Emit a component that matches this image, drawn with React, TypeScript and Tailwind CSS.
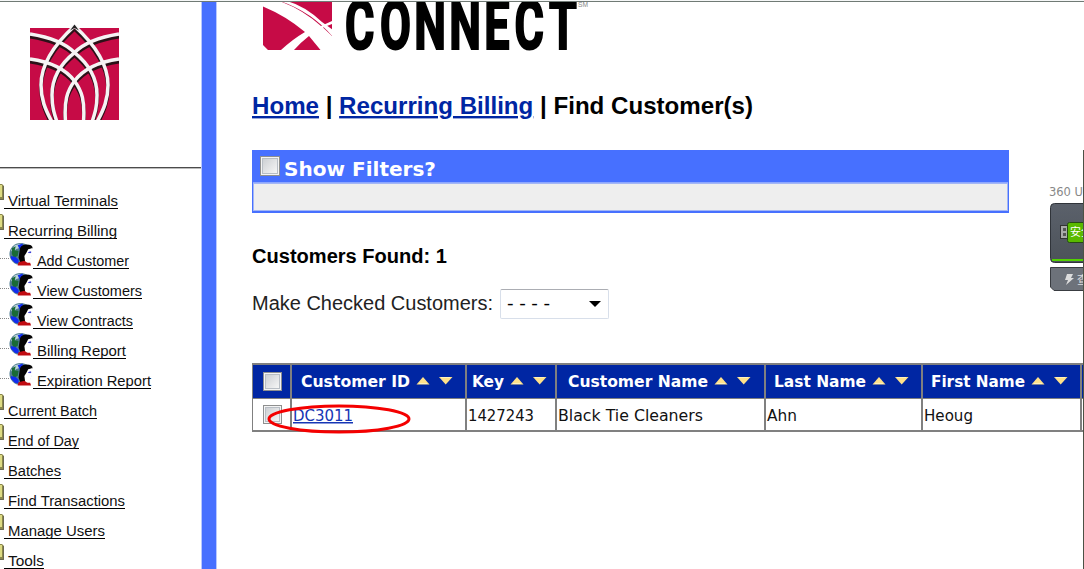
import React from "react";

const nav = [
  { label: "Virtual Terminals", child: false, w: "w-[114px]" },
  { label: "Recurring Billing", child: false, w: "w-[113px]" },
  { label: "Add Customer", child: true, w: "w-[96px]" },
  { label: "View Customers", child: true, w: "w-[109px]" },
  { label: "View Contracts", child: true, w: "w-[100px]" },
  { label: "Billing Report", child: true, w: "w-[93px]" },
  { label: "Expiration Report", child: true, w: "w-[118px]" },
  { label: "Current Batch", child: false, w: "w-[93px]" },
  { label: "End of Day", child: false, w: "w-[75px]" },
  { label: "Batches", child: false, w: "w-[57px]" },
  { label: "Find Transactions", child: false, w: "w-[121px]" },
  { label: "Manage Users", child: false, w: "w-[101px]" },
  { label: "Tools", child: false, w: "w-[40px]" },
];

function Petals() {
  const half =
    "M44.5 -3C28 12 11 32 11 56C11 70 15 80 22 93M0 5C25 9 38 17 44.5 23.6C60 36 67 50 67 66C67 78 65 84 62 93M0 30C22 33 37 42 44.5 52C52 62 55 72 53.5 93";
  return (
    <>
      <path d={half} />
      <path d={half} transform="translate(89 0) scale(-1 1)" />
    </>
  );
}

function Emblem() {
  return (
    <svg width="91" height="96" viewBox="-1 -5 91 96" className="block">
      <path d="M0 -1H89V91H0Z" fill="#c60b46" />
      <path d="M35 -1H54L49 -3L44.5 -5L40 -3Z" fill="#fff" />
      <g fill="none" stroke="#2b1118" strokeWidth="3.6" transform="translate(0 2.8)"><Petals /></g>
      <g fill="none" stroke="#f5f3f4" strokeWidth="3.5"><Petals /></g>
      <path d="M40 1.5L44.5 -4.5L49 1.5L44.5 -1Z" fill="#222" />
      <path d="M-1 -5H0V91H-1ZM89 -5H90V91H89Z" fill="#fff" />
    </svg>
  );
}

function GlobeFace() {
  return (
    <svg width="25" height="26" viewBox="0 0 25 26" className="block">
      <circle cx="12" cy="13" r="11.5" fill="#527d93" />
      <path d="M2 9L6 4L13 2L10 7L7 8L5 13Z" fill="#bad3d6" />
      <path d="M3 7L7 5L6 9L10 10L9 15L5 17L3 13Z" fill="#196b36" />
      <path d="M2 15L7 16L10 19L10 23L6 22L2 18ZM9 4L14 2L15 6L11 8Z" fill="#102cf0" />
      <path d="M11 10Q11 3 18 3Q25 3 24.5 7L20 9L18 14L17 18V22H12L10 17Z" fill="#050505" />
      <path d="M24 7L20 8L18 12L16 15L17 22H22L22.5 18L24 17L23.5 15L25 13L23.5 11Z" fill="#fff" />
      <path d="M20 11.5H23M22 10V12" stroke="#3436d6" />
      <path d="M9 25L10 21.5L16 20L19 22H22L23 25Z" fill="#c00b12" />
    </svg>
  );
}

function Folder() {
  return (
    <svg width="5" height="19" viewBox="0 0 5 19" className="block">
      <path d="M0 1H2L4 3V17H0Z" fill="#8b874c" />
      <path d="M0 2H2V14H0Z" fill="#dddb83" />
      <path d="M0 16.5H3.5V3" fill="none" stroke="#6b6950" />
    </svg>
  );
}

function Box({ size = "size-[20px]" }: { size?: string }) {
  return (
    <span className={`block shrink-0 border border-[#8e8f8f] bg-[#f4f4f4] p-px ${size}`}>
      <span className="block size-full border border-[#b8bec5] bg-linear-to-br from-[#cdd0d4] to-[#f6f6f6]" />
    </span>
  );
}

function Sort() {
  return (
    <svg width="37" height="10" viewBox="0 0 37 10" className="mb-[2px] block shrink-0">
      <path d="M7 1L13.5 8.5H.5Z" fill="#ffe18a" />
      <path d="M3 7.5H11" stroke="#fff2bd" />
      <path d="M23 1H36.5L29.7 8.5Z" fill="#ffe18a" />
      <path d="M25 1.5H34" stroke="#fff2bd" />
    </svg>
  );
}

function Label({ text, w, cls }: { text: string; w: number; cls: string }) {
  return (
    <svg width={w} height="20" className="block shrink-0 overflow-visible">
      <text x="0" y="15" textLength={w} lengthAdjust="spacingAndGlyphs" className={cls}>{text}</text>
    </svg>
  );
}

const columns = [
  { title: "Customer ID", value: "DC3011", w: "w-[175px]", pad: "pl-[9px]", tw: 109, vw: 60 },
  { title: "Key", value: "1427243", w: "w-[90px]", pad: "pl-[5px]", tw: 32, vw: 66 },
  { title: "Customer Name", value: "Black Tie Cleaners", w: "w-[209px]", pad: "pl-[11px]", tw: 140, vw: 145 },
  { title: "Last Name", value: "Ahn", w: "w-[157px]", pad: "pl-[8px]", tw: 92, vw: 30 },
  { title: "First Name", value: "Heoug", w: "w-[159px]", pad: "pl-[8px]", tw: 94, vw: 49 },
];

export default function App() {
  return (
    <div className="relative flex h-[569px] w-[1084px] overflow-hidden bg-white font-['Liberation_Sans',sans-serif] text-black">
      <div className="absolute inset-x-0 top-0 h-[2px] border-b border-[#707a75] bg-[#f5f7f7]" />
      <aside className="w-[201px] shrink-0">
        <div className="h-[167px] pt-[24px] pl-[29px]"><Emblem /></div>
        <div className="h-[2px] border-t border-[#4b4b4b] bg-[#bbb]" />
        <nav className="pt-[12px]">
          {nav.map((item) => (
            <div key={item.label} className="flex h-[30px] items-start">
              {item.child ? (
                <div className="flex w-[33px] shrink-0">
                  <span className="mt-[17px] h-px w-[9px] shrink-0 border-t border-dotted border-[#888]" />
                  <GlobeFace />
                </div>
              ) : (
                <div className="w-[4px] shrink-0 pt-[2px]"><Folder /></div>
              )}
              <a className={`mt-[9px] block h-[19px] shrink-0 border-b border-black pl-[4px] ${item.w}`}>
                <svg className="block h-[18px] w-full overflow-visible">
                  <text x="0" y="16" textLength="100%" lengthAdjust="spacingAndGlyphs" className="fill-[#111] text-[14.67px]">{item.label}</text>
                </svg>
              </a>
            </div>
          ))}
        </nav>
      </aside>
      <div className="mt-[2px] w-[16px] shrink-0 border-x border-[#b8c8ff] bg-[#4770ff]" />
      <main className="min-w-0 flex-1 pl-[35px]">
        <svg width="370" height="91" viewBox="252 0 370 91" className="block">
          <path d="M263 6.5Q286 16 305 32Q293 39 281 50H268L263 45ZM282 2H332V21L321 26Q303 10 282 2ZM309 36L320.5 50H294Q300 43 309 36ZM323 27.5L332 24V36Z" fill="#c60b46" />
          <path d="M280 1Q312 12 333 37V30L322 22Q305 6 287 1Z" fill="#fff" />
          <g transform="translate(345 49) scale(.66 1)">
            <text x="0 53 105 158 211 257 309" y="0" fontSize="68" fontWeight="700" stroke="#000" strokeWidth="2.2" className="font-['Roboto',sans-serif]">CONNECT</text>
          </g>
          <text x="578" y="7" fontSize="7" textLength="10" lengthAdjust="spacingAndGlyphs" fill="#888">SM</text>
          <path d="M252 0H622V1H252Z" fill="#fff" />
          <path d="M252 1.5H622" stroke="#707a75" />
        </svg>
        <h1 className="flex h-[30px] items-start text-2xl leading-[30px] font-bold whitespace-pre">
          <svg width="502" height="30" className="block overflow-visible">
            <text y="23" textLength="501" lengthAdjust="spacingAndGlyphs">
              <tspan className="fill-[#0026a3] underline">Home</tspan> | <tspan className="fill-[#0026a3] underline">Recurring Billing</tspan> | Find Customer(s)
            </text>
          </svg>
        </h1>
        <section className="mt-[29px] h-[63px] w-[757px] border border-b-2 border-[#4770ff] bg-[#eee]">
          <div className="flex h-[32px] items-start border-b border-[#8da7ff] bg-[#4770ff] pt-[5px] pl-[7px]">
            <Box />
            <div className="mt-[5px] ml-[4px]"><Label text="Show Filters?" w={152} cls="fill-white font-['DejaVu_Sans'] text-[20px] font-bold" /></div>
          </div>
          <div className="h-[28px] border border-[#a3b6f5]" />
        </section>
        <h2 className="mt-[35px] h-[20px]"><Label text="Customers Found: 1" w={195} cls="fill-black text-[20px] font-bold" /></h2>
        <div className="mt-[21px] flex h-[30px]">
          <div className="mt-[6px] w-[248px]"><Label text="Make Checked Customers:" w={241} cls="fill-[#222] text-[20px]" /></div>
          <div className="flex w-[109px] items-start justify-between rounded-[2px] border border-[#d8dfea] border-t-[#abadb3] pt-[5px] pr-[7px] pl-[6px]">
            <Label text="- - - -" w={43} cls="fill-black text-[18px]" />
            <svg width="12" height="7" className="mt-[6px]"><path d="M0 0H12L6 6Z" fill="#000" /></svg>
          </div>
        </div>
        <div className="mt-[44px] w-[850px] border-y-2 border-l border-[#808080]">
          <div className="flex h-[33px] bg-[#0026a3]">
            <div className="w-[39px] shrink-0 border-r-2 border-[#808080] pt-[7px] pl-[10px]"><Box size="size-[19px]" /></div>
            {columns.map((c) => (
              <div key={c.title} className={`flex shrink-0 items-center gap-[6px] border-r-2 border-[#808080] ${c.w} ${c.pad}`}>
                <Label text={c.title} w={c.tw} cls="fill-white font-['DejaVu_Sans'] text-[15px] font-bold" />
                <Sort />
              </div>
            ))}
          </div>
          <div className="flex h-[32px] border-t border-[#808080] bg-white">
            <div className="w-[39px] shrink-0 border-r-2 border-[#808080] pt-[6px] pl-[10px]"><Box size="size-[19px]" /></div>
            {columns.map((c) => (
              <div key={c.title} className={`shrink-0 border-r-2 border-[#808080] pt-[7px] pl-px ${c.w}`}>
                <Label text={c.value} w={c.vw} cls={c.value === "DC3011" ? "fill-[#1636b5] font-['DejaVu_Sans'] text-[15px] underline" : "fill-[#111] font-['DejaVu_Sans'] text-[15px]"} />
              </div>
            ))}
          </div>
        </div>
      </main>
      <svg className="absolute top-[403px] left-[267px]" width="145" height="32">
        <ellipse cx="72" cy="16" rx="70" ry="13" fill="none" stroke="#f40000" strokeWidth="3" />
      </svg>
      <aside className="absolute top-[150px] left-[1048px] h-[419px] w-[36px] overflow-hidden">
        <svg width="36" height="419">
          <defs><linearGradient id="panel" x2="0" y2="1"><stop stopColor="#5b616b" /><stop offset="1" stopColor="#4c5259" /></linearGradient></defs>
          <text x="1" y="46" fontSize="11.5" fill="#888" className="font-['DejaVu_Sans']" textLength="46" lengthAdjust="spacingAndGlyphs">360 U盘</text>
          <rect x="2.5" y="53.5" width="60" height="59" rx="4" fill="url(#panel)" stroke="#30343a" />
          <path d="M4 110H36" stroke="#52d000" strokeWidth="2" />
          <rect x="12.5" y="75.5" width="10" height="13" fill="#aaa" stroke="#333" />
          <path d="M15 78H18V81H15ZM15 83H18V86H15Z" fill="#555" />
          <rect x="19.5" y="72.5" width="30" height="20" rx="2" fill="#59b900" stroke="#274c14" />
          <text x="22" y="86" fontSize="11" fill="#fff" className="font-['Noto_Sans_CJK_SC',sans-serif]">安全</text>
          <path d="M2.5 117.5H36V140.5H6L2.5 137Z" fill="#6d727a" stroke="#393c41" />
          <path d="M19 124H25L23 128H26L18 135L20 130H17Z" fill="#ddd" />
          <text x="29" y="134" fontSize="11" fill="#ddd" className="font-['Noto_Sans_CJK_SC',sans-serif]">查</text>
          <path d="M35.5 0V419" stroke="#4c5145" />
        </svg>
      </aside>
    </div>
  );
}
